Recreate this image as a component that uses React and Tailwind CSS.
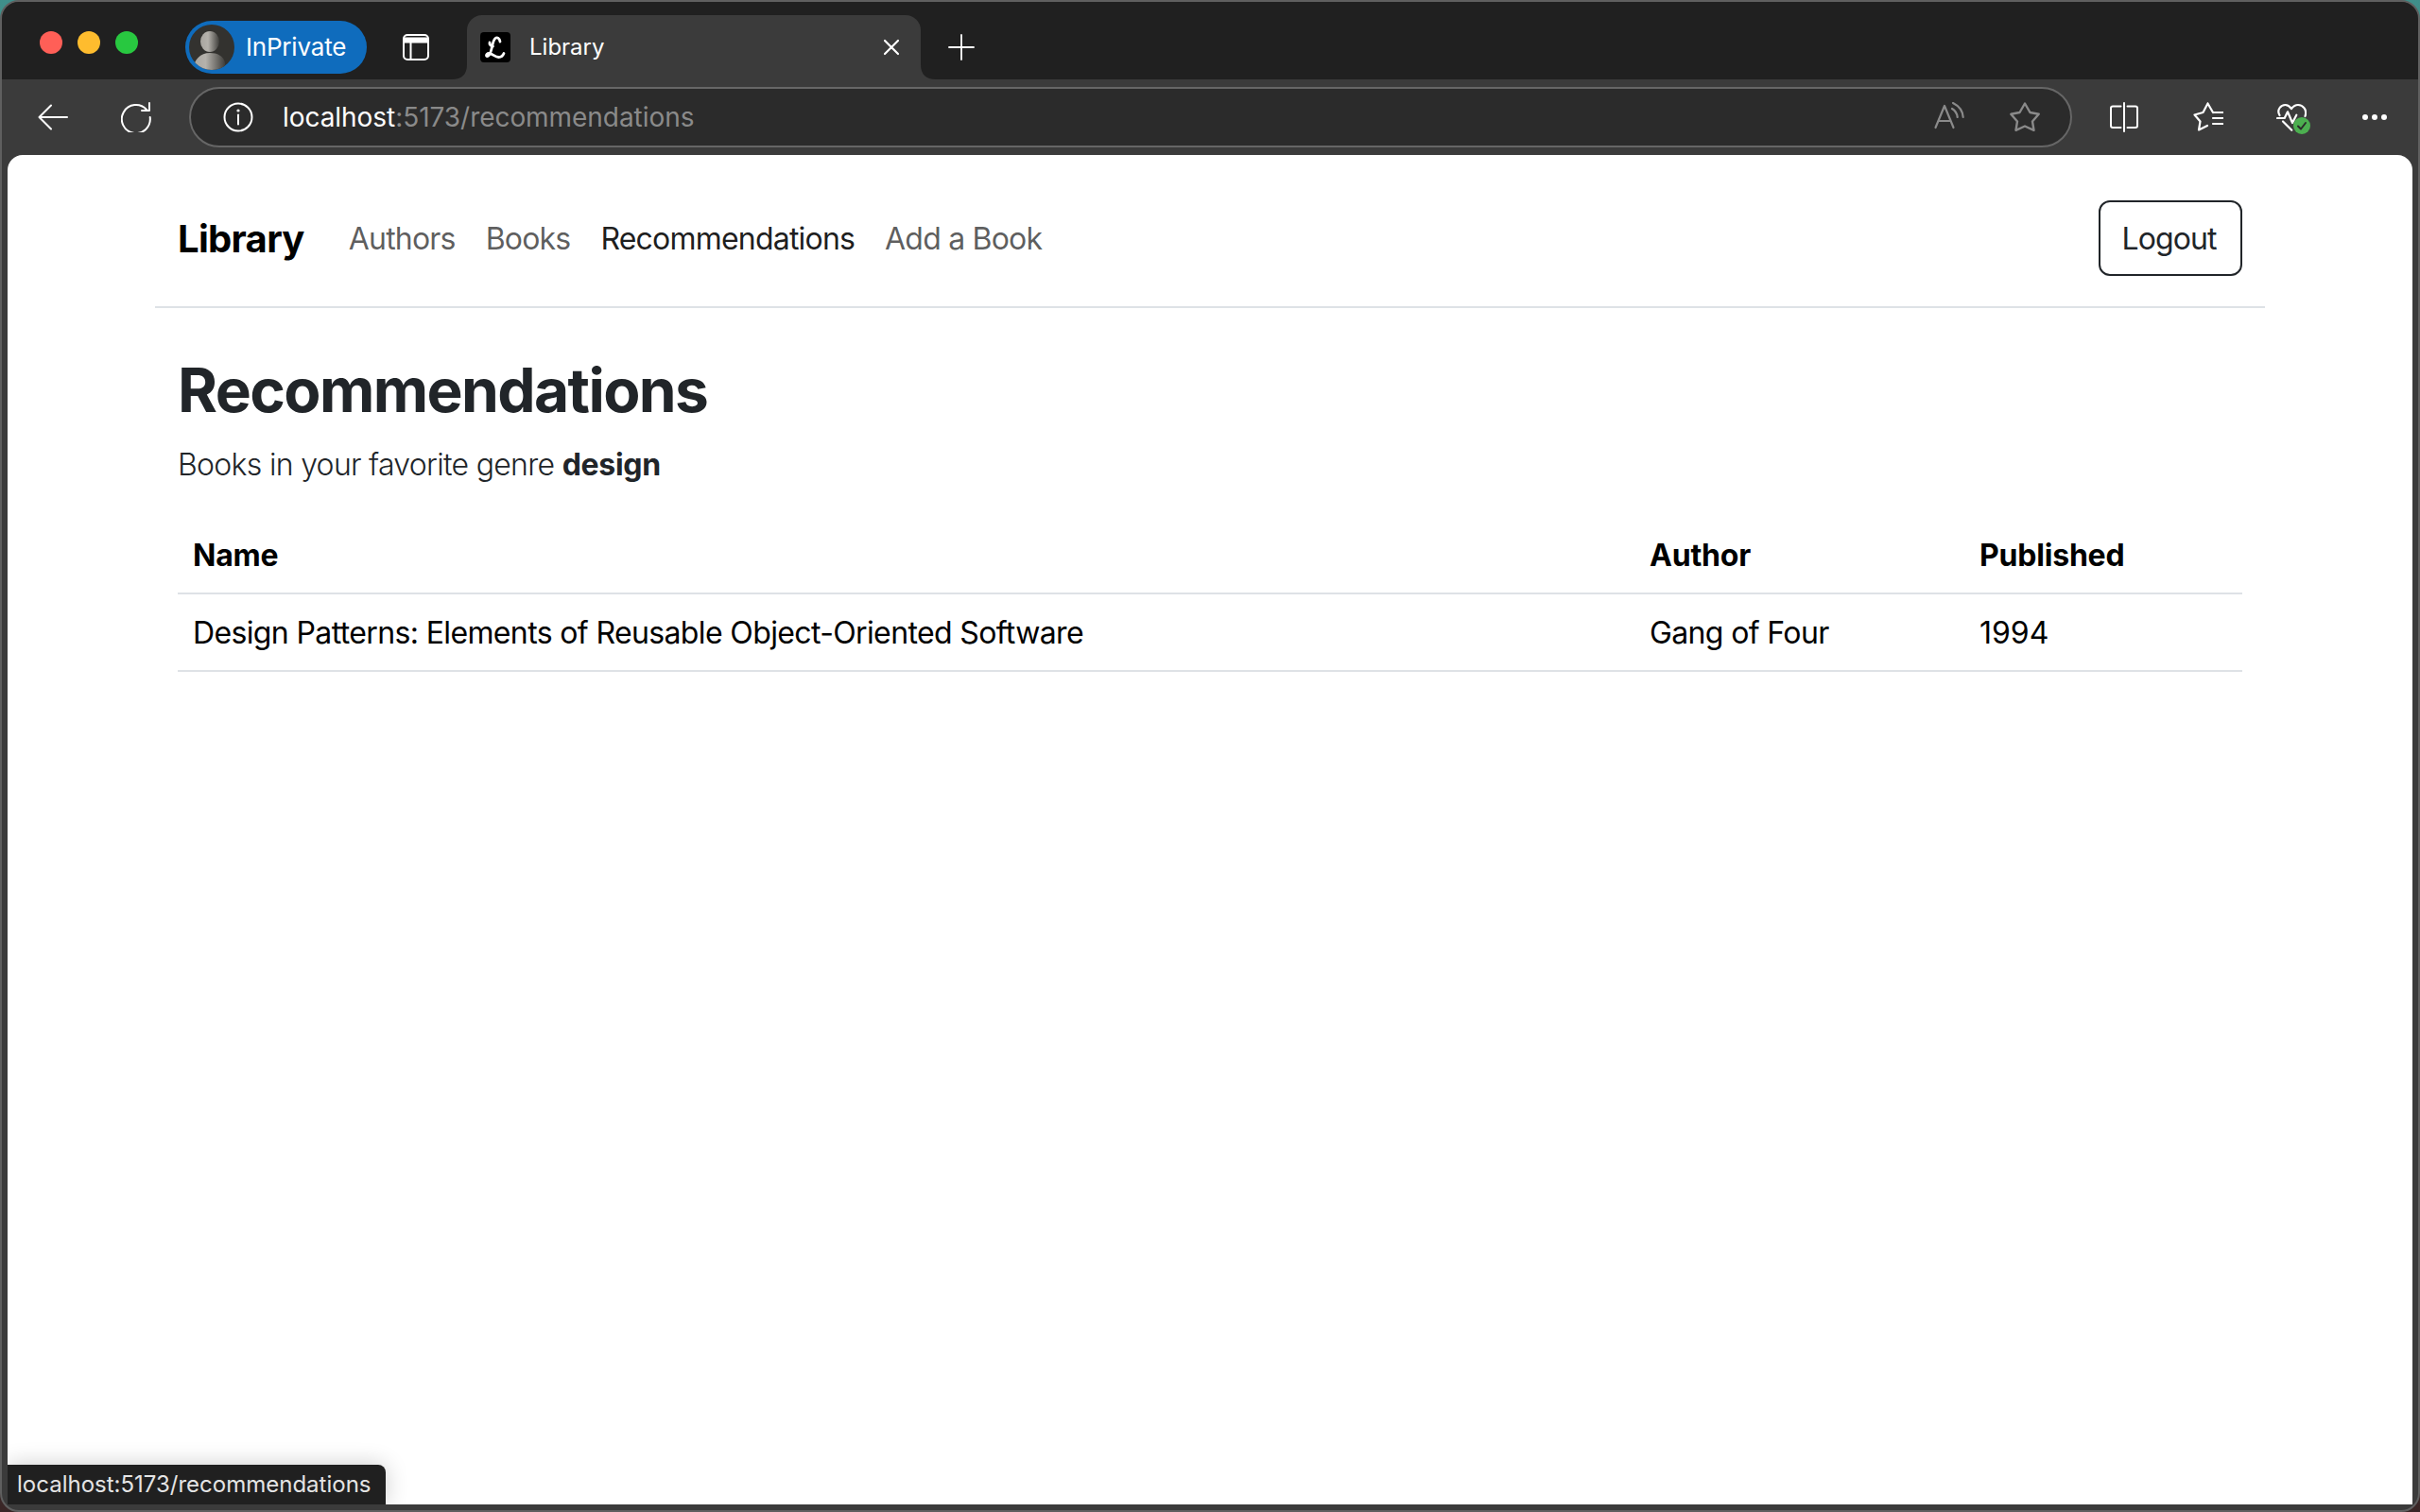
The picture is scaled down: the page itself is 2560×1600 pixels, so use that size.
import React from "react";

const font = { fontFamily: "Inter, sans-serif" };

function Dot({ className }) {
  return <div className={`w-[24px] h-[24px] rounded-full ${className}`} />;
}

// Avatar del pill InPrivate
function Avatar() {
  return (
    <svg width="48" height="48" viewBox="0 0 48 48" className="shrink-0">
      <defs>
        <linearGradient id="av" x1="0" y1="0" x2="1" y2="0">
          <stop offset="0" stopColor="#a8a59f" />
          <stop offset="0.4" stopColor="#b5b2ac" />
          <stop offset="1" stopColor="#3f3e3b" />
        </linearGradient>
        <clipPath id="avc"><circle cx="24" cy="24" r="24" /></clipPath>
      </defs>
      <circle cx="24" cy="24" r="24" fill="#33322f" />
      <g clipPath="url(#avc)">
        <ellipse cx="22" cy="18" rx="10" ry="11" fill="url(#av)" />
        <path d="M4 48C5 37 12 30 22 30C30 30 36 33 38 40L38 48Z" fill="url(#av)" />
      </g>
    </svg>
  );
}

function Stroke({ w = 32, h = 32, view = "0 0 32 32", children, color = "#fff", sw = 2 }) {
  return (
    <svg width={w} height={h} viewBox={view} fill="none" stroke={color} strokeWidth={sw} strokeLinecap="round" strokeLinejoin="round" className="shrink-0">
      {children}
    </svg>
  );
}

function TabBar() {
  return (
    <div className="h-[82px] bg-[#202020] flex items-start">
      <div className="flex items-center gap-[16px] pl-[40px] pt-[31px]">
        <Dot className="bg-[#ff5f57]" />
        <Dot className="bg-[#febc2e]" />
        <Dot className="bg-[#28c840]" />
      </div>
      <div className="ml-[50px] mt-[20px] w-[192px] h-[56px] rounded-full bg-[#0f6cbd] flex items-center pl-[4px] gap-[12px]">
        <Avatar />
        <span className="text-white text-[26px] leading-none tracking-[-0.2px]">InPrivate</span>
      </div>
      <div className="ml-[38px] mt-[34px]">
        <Stroke w={28} h={28} view="0 0 28 28" sw={2}>
          <rect x="1" y="1" width="26" height="26" rx="4" />
          <path d="M1 6.5H27" strokeWidth="6" strokeLinecap="butt" />
          <path d="M8.5 8V27" />
        </Stroke>
      </div>
      <div className="ml-[40px] mt-[14px] w-[480px] h-[68px] bg-[#3b3b3b] rounded-t-[16px] flex items-center pl-[14px] pr-[22px] relative">
        <svg width="16" height="16" viewBox="0 0 16 16" className="absolute -left-[16px] bottom-0" fill="#3b3b3b">
          <path d="M16 0V16H0Q16 16 16 0Z" />
        </svg>
        <svg width="16" height="16" viewBox="0 0 16 16" className="absolute -right-[16px] bottom-0" fill="#3b3b3b">
          <path d="M0 0V16H16Q0 16 0 0Z" />
        </svg>
        <svg width="32" height="32" viewBox="0 0 32 32" className="shrink-0">
          <rect width="32" height="32" rx="4" fill="#000" />
          <path d="M21 10C20.5 6.5 18 5 16 6.5C13.5 8.5 13 14 11.5 19.5C10.5 23.5 8.5 26 7 25.5C5.5 24.5 7.5 22 10 22.5C13 23 16 26.5 19.5 26.5C22 26.5 24 25 25 22.5M13.5 15C11 14.5 9.5 13 10 11" fill="none" stroke="#fff" strokeWidth="2.8" strokeLinecap="round" strokeLinejoin="round" />
        </svg>
        <span className="ml-[20px] text-white text-[24px] leading-none flex-1">Library</span>
        <Stroke w={18} h={18} view="0 0 18 18" sw={2.2}>
          <path d="M2 2L16 16M16 2L2 16" />
        </Stroke>
      </div>
      <div className="ml-[29px] mt-[34px]">
        <Stroke w={28} h={28} view="0 0 28 28" sw={1.8}>
          <path d="M14 1V27M1 14H27" />
        </Stroke>
      </div>
    </div>
  );
}

function ToolBar() {
  return (
    <div className="h-[80px] bg-[#3b3b3b] flex items-center pl-[38px]">
      <Stroke w={32} h={28} view="0 0 32 28">
        <path d="M31 14H2M14 1.5L1.5 14L14 26.5" />
      </Stroke>
      <div className="ml-[56px]">
        <Stroke>
          <path d="M27 8A15 15 0 1 0 30.7 16" />
          <path d="M22 9H30V1" />
        </Stroke>
      </div>
      <div className="ml-[40px] w-[1992px] h-[64px] rounded-full bg-[#2b2b2b] border-2 border-[#666666] flex items-center pl-[34px] pr-[32px]">
        <Stroke>
          <circle cx="16" cy="16" r="14.5" />
          <path d="M16 13.5V23.5" />
          <circle cx="16" cy="9" r="0.6" />
        </Stroke>
        <div className="ml-[31px] text-[28px] leading-none flex-1 tracking-[-0.05px]">
          <span className="text-white">localhost</span>
          <span className="text-[#8a8a8a]">:5173/recommendations</span>
        </div>
        <Stroke color="#8a8a8a" sw={2.2}>
          <path d="M1.5 27L11 4L20.5 27M4.5 20H17.5" />
          <path d="M19 7Q24 10 24.7 16M20 1Q30 6 30.7 16" />
        </Stroke>
        <div className="ml-[48px]">
          <Stroke color="#8a8a8a" sw={2.4}>
            <path d="M16 1.5L21.5 11L30.7 12.8L24 20.5L25.5 29.8L16 25.5L6.5 29.8L8 20.5L1.3 12.8L10.5 11Z" />
          </Stroke>
        </div>
      </div>
      <div className="ml-[40px]">
        <Stroke w={30} h={32} view="0 0 30 32">
          <path d="M11.5 4.5H3Q1 4.5 1 6.5V25Q1 27 3 27H11.5M18.5 4.5H27Q29 4.5 29 6.5V25Q29 27 27 27H18.5M15 1V31" />
        </Stroke>
      </div>
      <div className="ml-[58px]">
        <Stroke sw={2.2}>
          <path d="M21 11H31.5M15.5 1.5L21 11M15.5 1.5L10.5 11L1.5 13.5L7.5 20.5L6 29.5L15 25" />
          <path d="M21 17H31.5M21 23H31.5" />
        </Stroke>
      </div>
      <div className="ml-[56px] relative w-[36px] h-[32px]">
        <Stroke sw={2.2}>
          <path d="M3.5 14C0 8 5 3 9.5 3C12.5 3 14.5 5 16 7C17.5 5 20 3 23 3C28 3 33 8 30.5 15" />
          <path d="M1 17H8.7L12 10.3L17 22L21.3 13.7" />
          <path d="M7 20.5L16.3 29.7" />
        </Stroke>
        <div className="absolute right-0 -bottom-[2px] w-[18px] h-[18px] rounded-full bg-[#4caf50] flex items-center justify-center">
          <svg width="12" height="12" viewBox="0 0 12 12" fill="none" stroke="#2b2b2b" strokeWidth="2" strokeLinecap="round" strokeLinejoin="round">
            <path d="M2 6.5L5 9.5L10 3" />
          </svg>
        </div>
      </div>
      <div className="ml-[55px] flex gap-[4px]">
        <div className="w-[6px] h-[6px] rounded-full bg-white" />
        <div className="w-[6px] h-[6px] rounded-full bg-white" />
        <div className="w-[6px] h-[6px] rounded-full bg-white" />
      </div>
    </div>
  );
}

function NavBar() {
  return (
    <nav className="h-[162px] border-b-2 border-[#dee2e6] px-[24px] pt-[18px] flex items-center">
      <span className="text-[40px] font-bold text-black mr-[47px] tracking-[-0.7px]">Library</span>
      <div className="flex gap-[32px] text-[32px] flex-1 tracking-[-0.8px]">
        <a className="text-black/65">Authors</a>
        <a className="text-black/65">Books</a>
        <a className="text-black/90">Recommendations</a>
        <a className="text-black/65">Add a Book</a>
      </div>
      <button className="w-[152px] h-[80px] mb-[2px] pt-[2px] pr-[3px] border-2 border-[#212529] rounded-[12px] text-[32px] text-[#212529] tracking-[-0.9px]">Logout</button>
    </nav>
  );
}

function Recommendations() {
  return (
    <div className="px-[24px] pt-[48px]">
      <h1 className="text-[64px] leading-[77px] font-bold text-[#212529] tracking-[-1.6px]">Recommendations</h1>
      <p className="mt-[17px] text-[32px] leading-[48px] font-light text-[#212529] tracking-[-0.7px]">
        Books in your favorite genre <b className="font-bold tracking-[-0.3px]">design</b>
      </p>
      <table className="mt-[30px] w-full table-fixed text-[32px] text-black tracking-[-0.63px]">
        <thead>
          <tr className="border-b-2 border-[#dee2e6] h-[82px]">
            <th className="text-left font-bold px-[16px] pt-[2px] w-[1541px] tracking-[-0.2px]">Name</th>
            <th className="text-left font-bold px-[16px] pt-[2px] w-[349px] tracking-[-0.2px]">Author</th>
            <th className="text-left font-bold px-[16px] pt-[2px] tracking-[-0.2px]">Published</th>
          </tr>
        </thead>
        <tbody>
          <tr className="border-b-2 border-[#dee2e6] h-[82px]">
            <td className="px-[16px] pt-[2px]">Design Patterns: Elements of Reusable Object-Oriented Software</td>
            <td className="px-[16px] pt-[2px]">Gang of Four</td>
            <td className="px-[16px] pt-[2px] tracking-[0px]">1994</td>
          </tr>
        </tbody>
      </table>
    </div>
  );
}

export default function App() {
  return (
    <div className="h-screen w-full bg-linear-to-b from-[#3f8f8a] to-[#3a2626] overflow-hidden" style={font}>
      <div className="h-full rounded-[20px] overflow-hidden border-2 border-[#5f5f5f] bg-[#3b3b3b] flex flex-col">
        <TabBar />
        <ToolBar />
        <div className="flex-1 mx-[6px] mb-[6px] bg-white rounded-t-[16px] relative overflow-hidden">
          <div className="px-[156px]">
            <NavBar />
            <Recommendations />
          </div>
          <div className="absolute left-0 bottom-0 w-[400px] h-[42px] bg-[#202020] rounded-tr-[8px] flex items-center pl-[10px] text-[24px] text-[#e4e4e4] shadow-[0_0_24px_rgba(0,0,0,0.2)]">
            localhost:5173/recommendations
          </div>
        </div>
      </div>
    </div>
  );
}
